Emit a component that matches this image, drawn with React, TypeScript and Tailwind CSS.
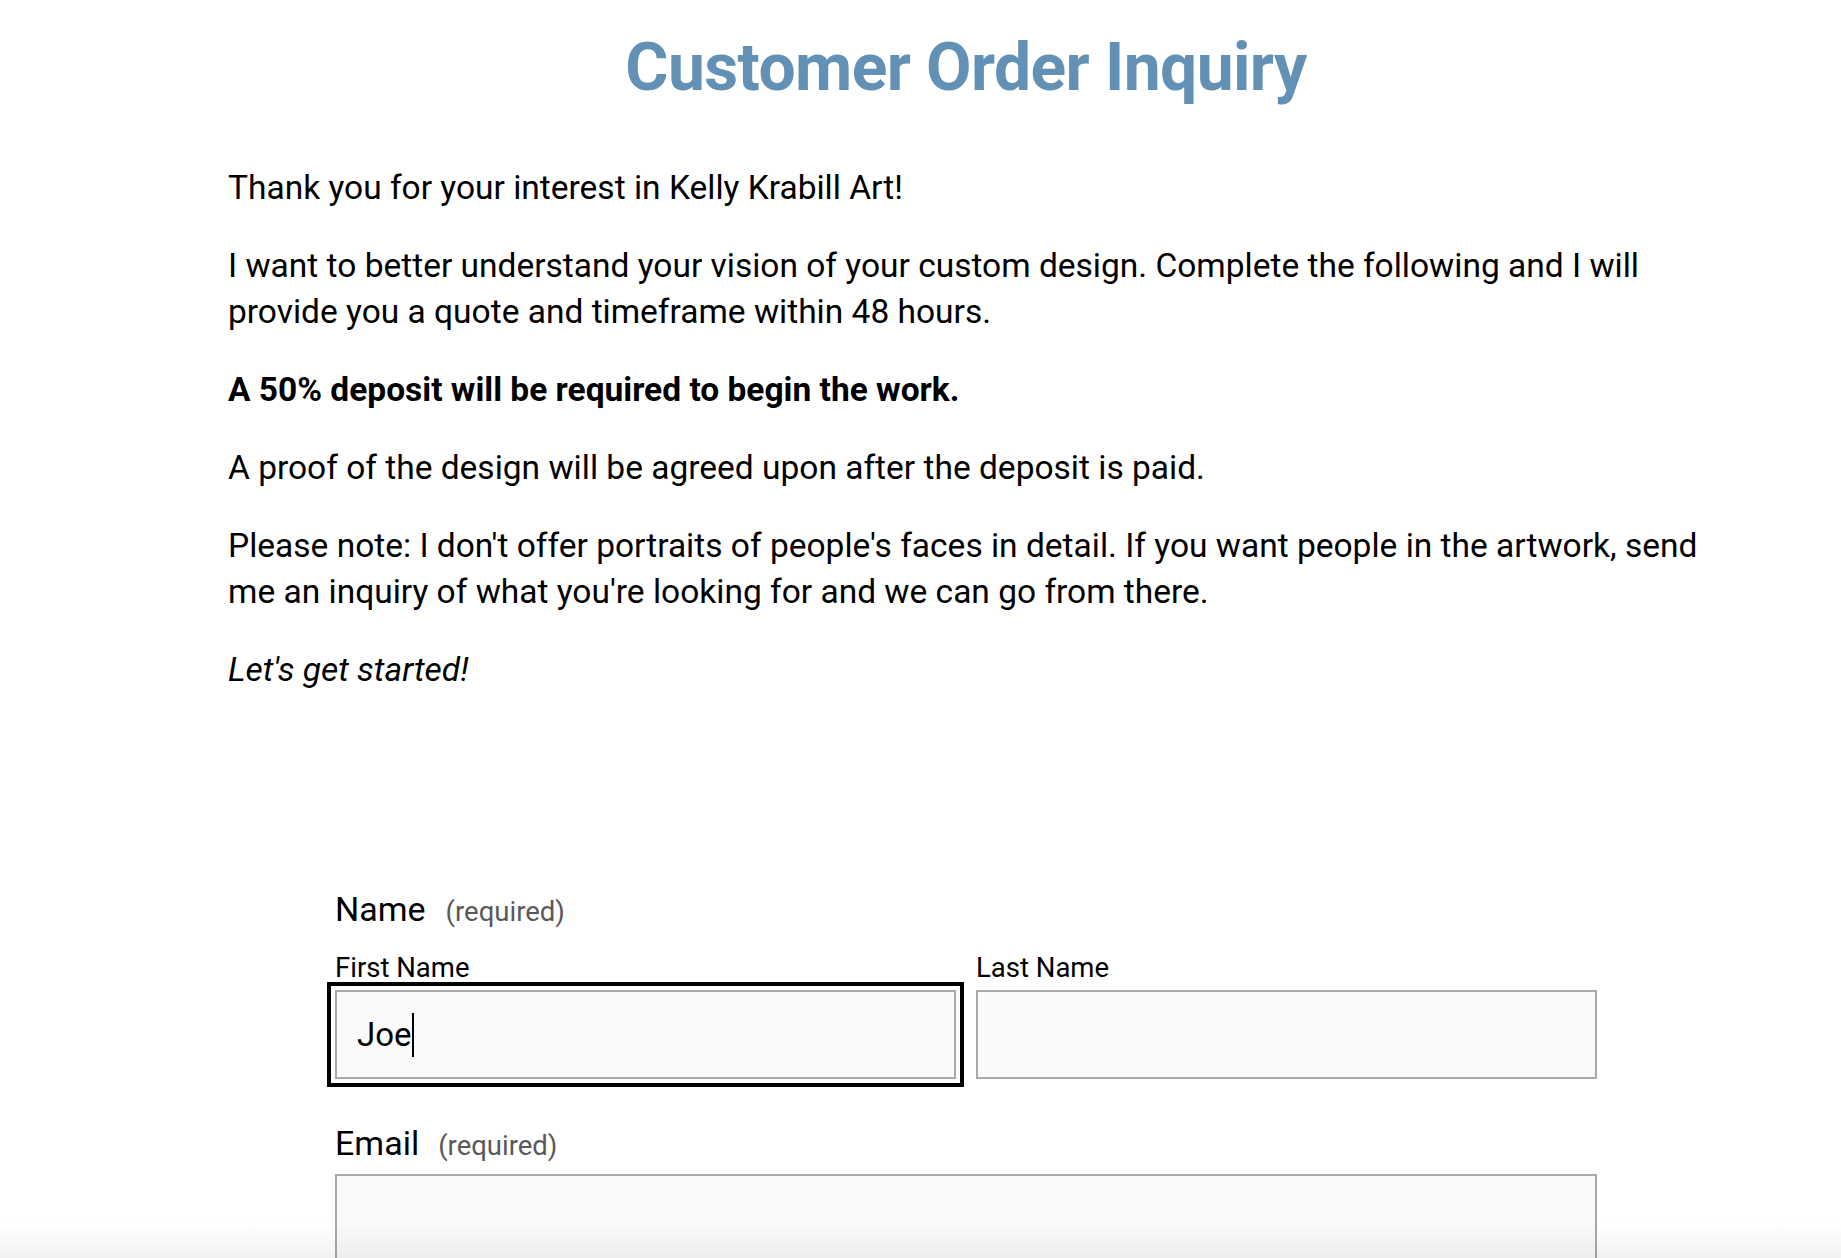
import React from "react";

export default function App() {
  return (
    <div className="relative min-h-screen bg-white text-black font-['Roboto',sans-serif] overflow-hidden h-[1258px]">
      <div className="ml-[228px] w-[1476px] pt-[28px]">
        {/* header */}
        <h1 className="text-center text-[66px] leading-[79px] font-bold tracking-[-0.6px] text-[#6391b5]">
          Customer Order Inquiry
        </h1>

        {/* intro copy */}
        <div className="mt-[58px] text-[33.5px] leading-[46px] flex flex-col gap-[32px]">
          <p>Thank you for your interest in Kelly Krabill Art!</p>
          <p>
            I want to better understand your vision of your custom design. Complete the following and I will
            provide you a quote and timeframe within 48 hours.
          </p>
          <p className="font-bold">A 50% deposit will be required to begin the work.</p>
          <p>A proof of the design will be agreed upon after the deposit is paid.</p>
          <p>
            Please note: I don't offer portraits of people's faces in detail. If you want people in the artwork, send
            me an inquiry of what you're looking for and we can go from there.
          </p>
          <p className="italic">Let's get started!</p>
        </div>

        {/* form */}
        <form className="mt-[196px] mx-[107px]">
          <div className="flex items-baseline gap-[20px] leading-[40px]">
            <span className="text-[34px]">Name</span>
            <span className="text-[27.5px] text-[#595959]">(required)</span>
          </div>

          <div className="mt-[20px] grid grid-cols-2 gap-[20px]">
            <div className="flex flex-col">
              <label className="text-[27.5px] leading-[32px] mb-[6px]">First Name</label>
              <div className="h-[89px] border-2 border-[#a9a9a9] bg-[#fafafa] outline-[4px] outline-solid outline-black outline-offset-[4px] flex items-center px-[20px]">
                <span className="text-[33px]">Joe</span>
                <span className="w-[2px] h-[44px] bg-black"></span>
              </div>
            </div>
            <div className="flex flex-col">
              <label className="text-[27.5px] leading-[32px] mb-[6px]">Last Name</label>
              <div className="h-[89px] border-2 border-[#a9a9a9] bg-[#fafafa]"></div>
            </div>
          </div>

          <div className="mt-[44px] flex items-baseline gap-[19px] leading-[40px]">
            <span className="text-[34px]">Email</span>
            <span className="text-[27.5px] text-[#595959]">(required)</span>
          </div>
          <div className="mt-[8px] h-[120px] border-2 border-[#a9a9a9] bg-[#fafafa]"></div>
        </form>
      </div>

      {/* bottom fade */}
      <div className="pointer-events-none absolute left-0 right-0 bottom-0 h-[36px] bg-gradient-to-b from-transparent to-black/[0.05]"></div>
    </div>
  );
}
